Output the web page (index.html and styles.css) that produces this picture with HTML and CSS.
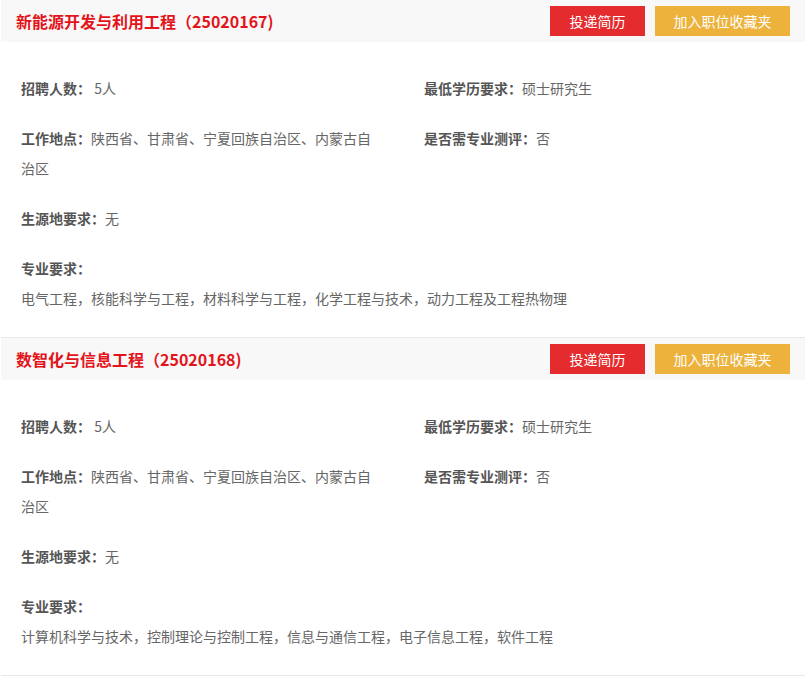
FILE: index.html
```html
<!DOCTYPE html>
<html lang="zh-CN">
<head>
    <meta charset="UTF-8">
    <meta name="viewport" content="width=device-width, initial-scale=1.0">
    <title>职位列表</title>
    <link rel="stylesheet" href="styles.css">
</head>
<body>
    <div class="job-list">
        <div class="job">
            <div class="job-head">
                <h3 class="job-title">新能源开发与利用工程（25020167)</h3>
                <div class="job-actions">
                    <a class="btn btn-apply" href="#">投递简历</a>
                    <a class="btn btn-fav" href="#">加入职位收藏夹</a>
                </div>
            </div>
            <ul class="job-info">
                <li class="col"><b>招聘人数：</b> 5人</li>
                <li><b>最低学历要求：</b>硕士研究生</li>
                <li class="col"><b>工作地点：</b>陕西省、甘肃省、宁夏回族自治区、内蒙古自治区</li>
                <li><b>是否需专业测评：</b>否</li>
                <li class="full"><b>生源地要求：</b>无</li>
                <li class="full">
                    <b class="block">专业要求：</b>
                    <p>电气工程，核能科学与工程，材料科学与工程，化学工程与技术，动力工程及工程热物理</p>
                </li>
            </ul>
        </div>

        <div class="job">
            <div class="job-head">
                <h3 class="job-title">数智化与信息工程（25020168)</h3>
                <div class="job-actions">
                    <a class="btn btn-apply" href="#">投递简历</a>
                    <a class="btn btn-fav" href="#">加入职位收藏夹</a>
                </div>
            </div>
            <ul class="job-info">
                <li class="col"><b>招聘人数：</b> 5人</li>
                <li><b>最低学历要求：</b>硕士研究生</li>
                <li class="col"><b>工作地点：</b>陕西省、甘肃省、宁夏回族自治区、内蒙古自治区</li>
                <li><b>是否需专业测评：</b>否</li>
                <li class="full"><b>生源地要求：</b>无</li>
                <li class="full">
                    <b class="block">专业要求：</b>
                    <p>计算机科学与技术，控制理论与控制工程，信息与通信工程，电子信息工程，软件工程</p>
                </li>
            </ul>
        </div>
    </div>
</body>
</html>
```

FILE: styles.css
```css
* {
    box-sizing: border-box;
    margin: 0;
    padding: 0;
}

body {
    font-family: "Microsoft YaHei", "Noto Sans CJK SC", "Noto Sans", sans-serif;
    background: #fff;
    color: #666;
    font-size: 14px;
}

.job-list {
    margin: 0 2px 0 1px;
}

.job {
    border-bottom: 1px solid #e8e8e8;
}

.job-head {
    display: flex;
    align-items: center;
    justify-content: space-between;
    height: 42px;
    padding: 0 15px;
    background: #f8f8f8;
}

.job-title {
    font-size: 16px;
    font-weight: bold;
    color: #e3141b;
    line-height: 42px;
}

.job-actions {
    display: flex;
    gap: 10px;
    margin-top: -1px;
}

.btn {
    display: block;
    height: 30px;
    line-height: 30px;
    text-align: center;
    color: #fff;
    font-size: 14px;
    text-decoration: none;
}

.btn-apply {
    width: 95px;
    background: #e42b2d;
}

.btn-fav {
    width: 135px;
    background: #ecb23b;
}

.job-info {
    list-style: none;
    display: grid;
    grid-template-columns: 403px 1fr;
    row-gap: 20px;
    padding: 31px 20px 24px 20px;
    line-height: 30px;
}

.job-info b {
    color: #555;
}

.job-info .col {
    max-width: 360px;
}

.job-info .full {
    grid-column: 1 / -1;
}

.job-info .block {
    display: block;
}
```
